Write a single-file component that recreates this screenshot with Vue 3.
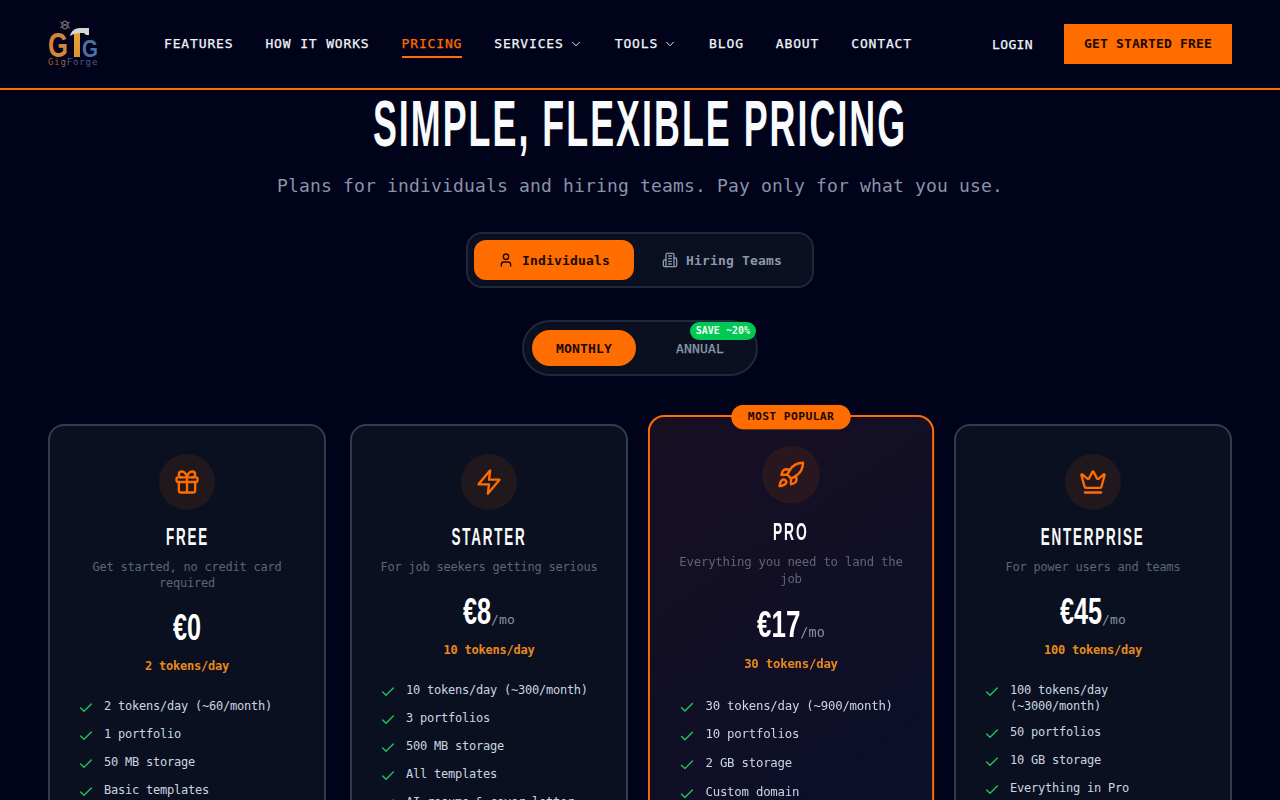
<script setup>
const icons = {
  gift: ['M4 8h16a1 1 0 0 1 1 1v2a1 1 0 0 1-1 1H4a1 1 0 0 1-1-1V9a1 1 0 0 1 1-1z', 'M12 8v13', 'M19 12v7a2 2 0 0 1-2 2H7a2 2 0 0 1-2-2v-7', 'M7.5 8a2.5 2.5 0 0 1 0-5A4.8 8 0 0 1 12 8a4.8 8 0 0 1 4.5-5 2.5 2.5 0 0 1 0 5'],
  zap: ['M13 2 3 14h9l-1 8 10-12h-9l1-8z'],
  rocket: ['M4.5 16.5c-1.5 1.26-2 5-2 5s3.74-.5 5-2c.71-.84.7-2.13-.09-2.91a2.18 2.18 0 0 0-2.91-.09z', 'm12 15-3-3a22 22 0 0 1 2-3.95A12.88 12.88 0 0 1 22 2c0 2.72-.78 7.5-6 11a22.35 22.35 0 0 1-4 2z', 'M9 12H4s.55-3.03 2-4c1.62-1.08 5 0 5 0', 'M12 15v5s3.03-.55 4-2c1.08-1.62 0-5 0-5'],
  crown: ['M11.562 3.266a.5.5 0 0 1 .876 0L15.39 8.87a1 1 0 0 0 1.516.294L21.183 5.5a.5.5 0 0 1 .798.519l-2.834 10.246a1 1 0 0 1-.956.734H5.81a1 1 0 0 1-.957-.734L2.02 6.02a.5.5 0 0 1 .798-.519l4.276 3.664a1 1 0 0 0 1.516-.294z', 'M5 21h14'],
  user: ['M19 21v-2a4 4 0 0 0-4-4H9a4 4 0 0 0-4 4v2', 'M12 3a4 4 0 1 1 0 8 4 4 0 0 1 0-8z'],
  building: ['M6 22V4a2 2 0 0 1 2-2h8a2 2 0 0 1 2 2v18Z', 'M6 12H4a2 2 0 0 0-2 2v6a2 2 0 0 0 2 2h2', 'M18 9h2a2 2 0 0 1 2 2v9a2 2 0 0 1-2 2h-2', 'M10 6h4', 'M10 10h4', 'M10 14h4', 'M10 18h4'],
  chevron: ['m6 9 6 6 6-6'],
  check: ['M20 6 9 17l-5-5']
}

const navLinks = [
  { label: 'FEATURES' },
  { label: 'HOW IT WORKS' },
  { label: 'PRICING', active: true },
  { label: 'SERVICES', menu: true },
  { label: 'TOOLS', menu: true },
  { label: 'BLOG' },
  { label: 'ABOUT' },
  { label: 'CONTACT' }
]

const plans = [
  {
    name: 'FREE',
    icon: 'gift',
    desc: 'Get started, no credit card required',
    price: '€0',
    tokens: '2 tokens/day',
    features: ['2 tokens/day (~60/month)', '1 portfolio', '50 MB storage', 'Basic templates']
  },
  {
    name: 'STARTER',
    icon: 'zap',
    desc: 'For job seekers getting serious',
    price: '€8',
    per: '/mo',
    tokens: '10 tokens/day',
    features: ['10 tokens/day (~300/month)', '3 portfolios', '500 MB storage', 'All templates', 'AI resume & cover letter']
  },
  {
    name: 'PRO',
    icon: 'rocket',
    desc: 'Everything you need to land the job',
    price: '€17',
    per: '/mo',
    tokens: '30 tokens/day',
    popular: true,
    features: ['30 tokens/day (~900/month)', '10 portfolios', '2 GB storage', 'Custom domain']
  },
  {
    name: 'ENTERPRISE',
    icon: 'crown',
    desc: 'For power users and teams',
    price: '€45',
    per: '/mo',
    tokens: '100 tokens/day',
    features: ['100 tokens/day (~3000/month)', '50 portfolios', '10 GB storage', 'Everything in Pro']
  }
]

// the amount is squeezed with scaleX, so its box has to be pulled in per character
const amountMargin = (price) => ({ marginInline: `${-3 * price.length}px` })
</script>

<template>
  <div class="page">
    <header class="topbar">
      <a class="logo">
        <svg class="logo-svg" width="50" height="50" viewBox="0 0 50 50">
          <defs>
            <linearGradient id="logoGrad" x1="0" x2="1" y1="0" y2="0">
              <stop offset="0" stop-color="#e07f35" />
              <stop offset="1" stop-color="#c98a4a" />
            </linearGradient>
            <linearGradient id="stemGrad" x1="0" x2="0" y1="0" y2="1">
              <stop offset="0" stop-color="#e8a53a" />
              <stop offset="1" stop-color="#d8932e" />
            </linearGradient>
          </defs>
          <g fill="none" stroke-width="1">
            <ellipse cx="17" cy="6" rx="3" ry="4" stroke="#c9793d" />
            <path d="M12 3l10 6M22 3l-10 6" stroke="#5b79ad" />
          </g>
          <text x="0" y="38" class="logo-big" textLength="20" lengthAdjust="spacingAndGlyphs" fill="url(#logoGrad)">G</text>
          <rect x="26" y="14" width="6" height="24" fill="url(#stemGrad)" />
          <text x="34" y="38" class="logo-mid" textLength="16" lengthAdjust="spacingAndGlyphs" fill="#4c70ab">G</text>
          <path d="M22 17C23 12 27 9 32 9L41 9L41 16L38 16L36 14L32 14C28 14 25 15 22 17z" fill="#d6d6d6" />
          <text x="0" y="46" class="logo-small"><tspan fill="#a5622d">Gig</tspan><tspan fill="#4b5d80">Forge</tspan></text>
        </svg>
      </a>
      <nav class="nav">
        <a v-for="link in navLinks" :key="link.label" class="nav-link" :class="{ active: link.active }">
          {{ link.label }}
          <svg v-if="link.menu" class="icon chev" viewBox="0 0 24 24"><path v-for="d in icons.chevron" :key="d" :d="d" /></svg>
        </a>
      </nav>
      <div class="actions">
        <a class="login">LOGIN</a>
        <a class="cta">GET STARTED FREE</a>
      </div>
    </header>

    <main class="main">
      <h1 class="title"><span>SIMPLE, FLEXIBLE PRICING</span></h1>
      <p class="subtitle">Plans for individuals and hiring teams. Pay only for what you use.</p>

      <div class="audience">
        <button class="aud-btn on">
          <svg class="icon aud-icon" viewBox="0 0 24 24"><path v-for="d in icons.user" :key="d" :d="d" /></svg>
          Individuals
        </button>
        <button class="aud-btn">
          <svg class="icon aud-icon" viewBox="0 0 24 24"><path v-for="d in icons.building" :key="d" :d="d" /></svg>
          Hiring Teams
        </button>
      </div>

      <div class="billing">
        <button class="bill-btn on">MONTHLY</button>
        <button class="bill-btn">
          ANNUAL
          <span class="save">SAVE ~20%</span>
        </button>
      </div>

      <section class="plans">
        <article v-for="plan in plans" :key="plan.name" class="card" :class="{ popular: plan.popular }">
          <span v-if="plan.popular" class="ribbon">MOST POPULAR</span>
          <div class="plan-icon">
            <svg class="icon" viewBox="0 0 24 24"><path v-for="d in icons[plan.icon]" :key="d" :d="d" /></svg>
          </div>
          <h3 class="plan-name"><span>{{ plan.name }}</span></h3>
          <p class="plan-desc">{{ plan.desc }}</p>
          <div class="plan-price">
            <span class="amount" :style="amountMargin(plan.price)">{{ plan.price }}</span><span v-if="plan.per" class="per">{{ plan.per }}</span>
          </div>
          <div class="plan-tokens">{{ plan.tokens }}</div>
          <ul class="features">
            <li v-for="f in plan.features" :key="f">
              <svg class="icon tick" viewBox="0 0 24 24"><path v-for="d in icons.check" :key="d" :d="d" /></svg>
              <span>{{ f }}</span>
            </li>
          </ul>
        </article>
      </section>
    </main>
  </div>
</template>

<style>
html, body {
  margin: 0;
  background: #00031a;
  overflow: hidden;
}
</style>

<style scoped>
.page {
  min-height: 800px;
  background: #00031a;
  color: #f1f5f9;
  font-family: "DejaVu Sans Mono", "Liberation Mono", monospace;
}

.icon {
  fill: none;
  stroke: currentColor;
  stroke-width: 2;
  stroke-linecap: round;
  stroke-linejoin: round;
}

/* header */
.topbar {
  display: flex;
  align-items: center;
  height: 88px;
  padding: 0 48px;
  border-bottom: 2px solid #ff6d00;
}

.logo {
  display: block;
  width: 50px;
  height: 50px;
}

.logo-svg {
  overflow: visible;
}

.logo-big {
  font: 700 35px "Liberation Sans", sans-serif;
}

.logo-mid {
  font: 700 24px "Liberation Sans", sans-serif;
}

.logo-small {
  font: 400 9px "DejaVu Sans Mono", monospace;
  letter-spacing: 0.85px;
}

.nav {
  display: flex;
  gap: 32px;
  margin-left: 66px;
  flex: 1;
}

.nav-link {
  display: flex;
  align-items: center;
  gap: 5px;
  padding: 4px 0;
  border-bottom: 2px solid transparent;
  border-top: 2px solid transparent;
  font-size: 13px;
  line-height: 16px;
  letter-spacing: 0.85px;
  -webkit-text-stroke: 0.25px currentColor;
  color: #f1f5f9;
}

.nav-link.active {
  color: #ff6d00;
  border-bottom-color: #ff6d00;
}

.chev {
  width: 14px;
  height: 14px;
  stroke-width: 1.6;
}

.actions {
  display: flex;
  align-items: center;
  gap: 31px;
}

.login {
  font-size: 13px;
  letter-spacing: 0.37px;
  -webkit-text-stroke: 0.25px currentColor;
  color: #f1f5f9;
}

.cta {
  display: block;
  width: 168px;
  height: 40px;
  line-height: 40px;
  text-align: center;
  background: #ff6d00;
  color: #1a0800;
  font-size: 13px;
  letter-spacing: 0.17px;
  font-weight: 700;
}

/* hero */
.main {
  padding: 0 48px 40px;
}

.title {
  margin: 0;
  height: 72px;
  line-height: 68px;
  text-align: center;
  font-family: "Liberation Sans", sans-serif;
  font-size: 64px;
  font-weight: 700;
  letter-spacing: 3.6px;
  color: #f8fafc;
}

.title span {
  display: inline-block;
  white-space: nowrap;
  transform: scaleX(0.56);
}

.subtitle {
  margin: 12px 0 0;
  height: 24px;
  line-height: 24px;
  text-align: center;
  font-size: 18px;
  letter-spacing: 0.16px;
  color: #8b93a7;
}

.audience {
  display: flex;
  gap: 4px;
  width: fit-content;
  margin: 34px auto 0;
  padding: 6px;
  border: 2px solid #1e293b;
  border-radius: 16px;
  background: #0a1020;
}

.aud-btn {
  display: flex;
  align-items: center;
  gap: 8px;
  height: 40px;
  padding: 0 24px;
  border: 0;
  border-radius: 12px;
  background: none;
  color: #8b97ad;
  font-family: inherit;
  font-size: 13px;
  letter-spacing: 0.17px;
  font-weight: 700;
}

.aud-btn.on,
.bill-btn.on {
  background: #ff6d00;
  color: #1a0800;
}

.aud-icon {
  width: 16px;
  height: 16px;
}

.billing {
  display: flex;
  gap: 16px;
  width: fit-content;
  margin: 32px auto 0;
  padding: 8px;
  border: 2px solid #1e293b;
  border-radius: 28px;
  background: #0a1020;
}

.bill-btn {
  position: relative;
  height: 36px;
  padding: 0 24px;
  border: 0;
  border-radius: 18px;
  background: none;
  color: #8b97ad;
  font-family: inherit;
  font-size: 13px;
  letter-spacing: 0.17px;
  -webkit-text-stroke: 0.25px currentColor;
}

.bill-btn.on {
  font-weight: 700;
  -webkit-text-stroke: 0;
}

.save {
  position: absolute;
  top: -8px;
  right: -8px;
  height: 18px;
  line-height: 18px;
  padding: 0 6px;
  border-radius: 9px;
  background: #00c853;
  color: #eafff2;
  font-size: 10px;
  letter-spacing: 0;
  -webkit-text-stroke: 0;
  font-weight: 700;
  white-space: nowrap;
}

/* plans */
.plans {
  display: grid;
  grid-template-columns: repeat(4, 1fr);
  gap: 24px;
  margin-top: 48px;
}

.card {
  position: relative;
  box-sizing: border-box;
  min-height: 600px;
  padding: 28px;
  border: 2px solid #303d50;
  border-radius: 16px;
  background: #0a1020;
  text-align: center;
}

.card.popular {
  border-color: #ff6d00;
  background: linear-gradient(145deg, #170f22 0%, #0d0f28 60%, #0a1430 100%);
  transform: scale(1.03);
}

.ribbon {
  position: absolute;
  top: -12px;
  left: 50%;
  transform: translateX(-50%);
  height: 23.5px;
  line-height: 23.5px;
  padding: 0 16px;
  border-radius: 12px;
  background: #ff6d00;
  color: #1a0800;
  font-size: 11px;
  letter-spacing: 0.38px;
  font-weight: 700;
  white-space: nowrap;
}

.plan-icon {
  display: flex;
  align-items: center;
  justify-content: center;
  width: 56px;
  height: 56px;
  margin: 0 auto 12px;
  border-radius: 50%;
  background: rgba(255, 109, 0, 0.09);
  color: #ff6d00;
}

.plan-icon .icon {
  width: 28px;
  height: 28px;
}

.plan-name {
  margin: 0;
  height: 30px;
  line-height: 30px;
  font-family: "Liberation Sans", sans-serif;
  font-size: 24px;
  font-weight: 700;
  letter-spacing: 3.2px;
  color: #f8fafc;
}

.plan-name span {
  display: inline-block;
  white-space: nowrap;
  transform: scaleX(0.56);
}

.plan-desc {
  margin: 7px 0 0;
  font-size: 12px;
  letter-spacing: -0.23px;
  line-height: 16px;
  color: #5c6574;
}

.plan-price {
  margin-top: 15px;
  display: flex;
  align-items: baseline;
  justify-content: center;
  height: 43px;
  line-height: 44px;
}

.amount {
  font-family: "Liberation Sans", sans-serif;
  font-size: 36px;
  font-weight: 700;
  color: #fff;
  display: inline-block;
  transform: scaleX(0.7);
}

.per {
  font-size: 13px;
  letter-spacing: 0.17px;
  color: #8590a6;
}

.plan-tokens {
  margin-top: 9px;
  font-size: 12px;
  letter-spacing: -0.23px;
  line-height: 16px;
  font-weight: 700;
  color: #e8891c;
}

.features {
  list-style: none;
  margin: 24px 0 0;
  padding: 0;
  text-align: left;
  display: flex;
  flex-direction: column;
  gap: 10px;
}

.features li {
  display: flex;
  gap: 10px;
  font-size: 12px;
  letter-spacing: -0.23px;
  line-height: 16px;
  color: #cbd5e1;
}

.tick {
  flex: none;
  width: 16px;
  height: 16px;
  margin-top: 2px;
  color: #22c55e;
}
</style>
